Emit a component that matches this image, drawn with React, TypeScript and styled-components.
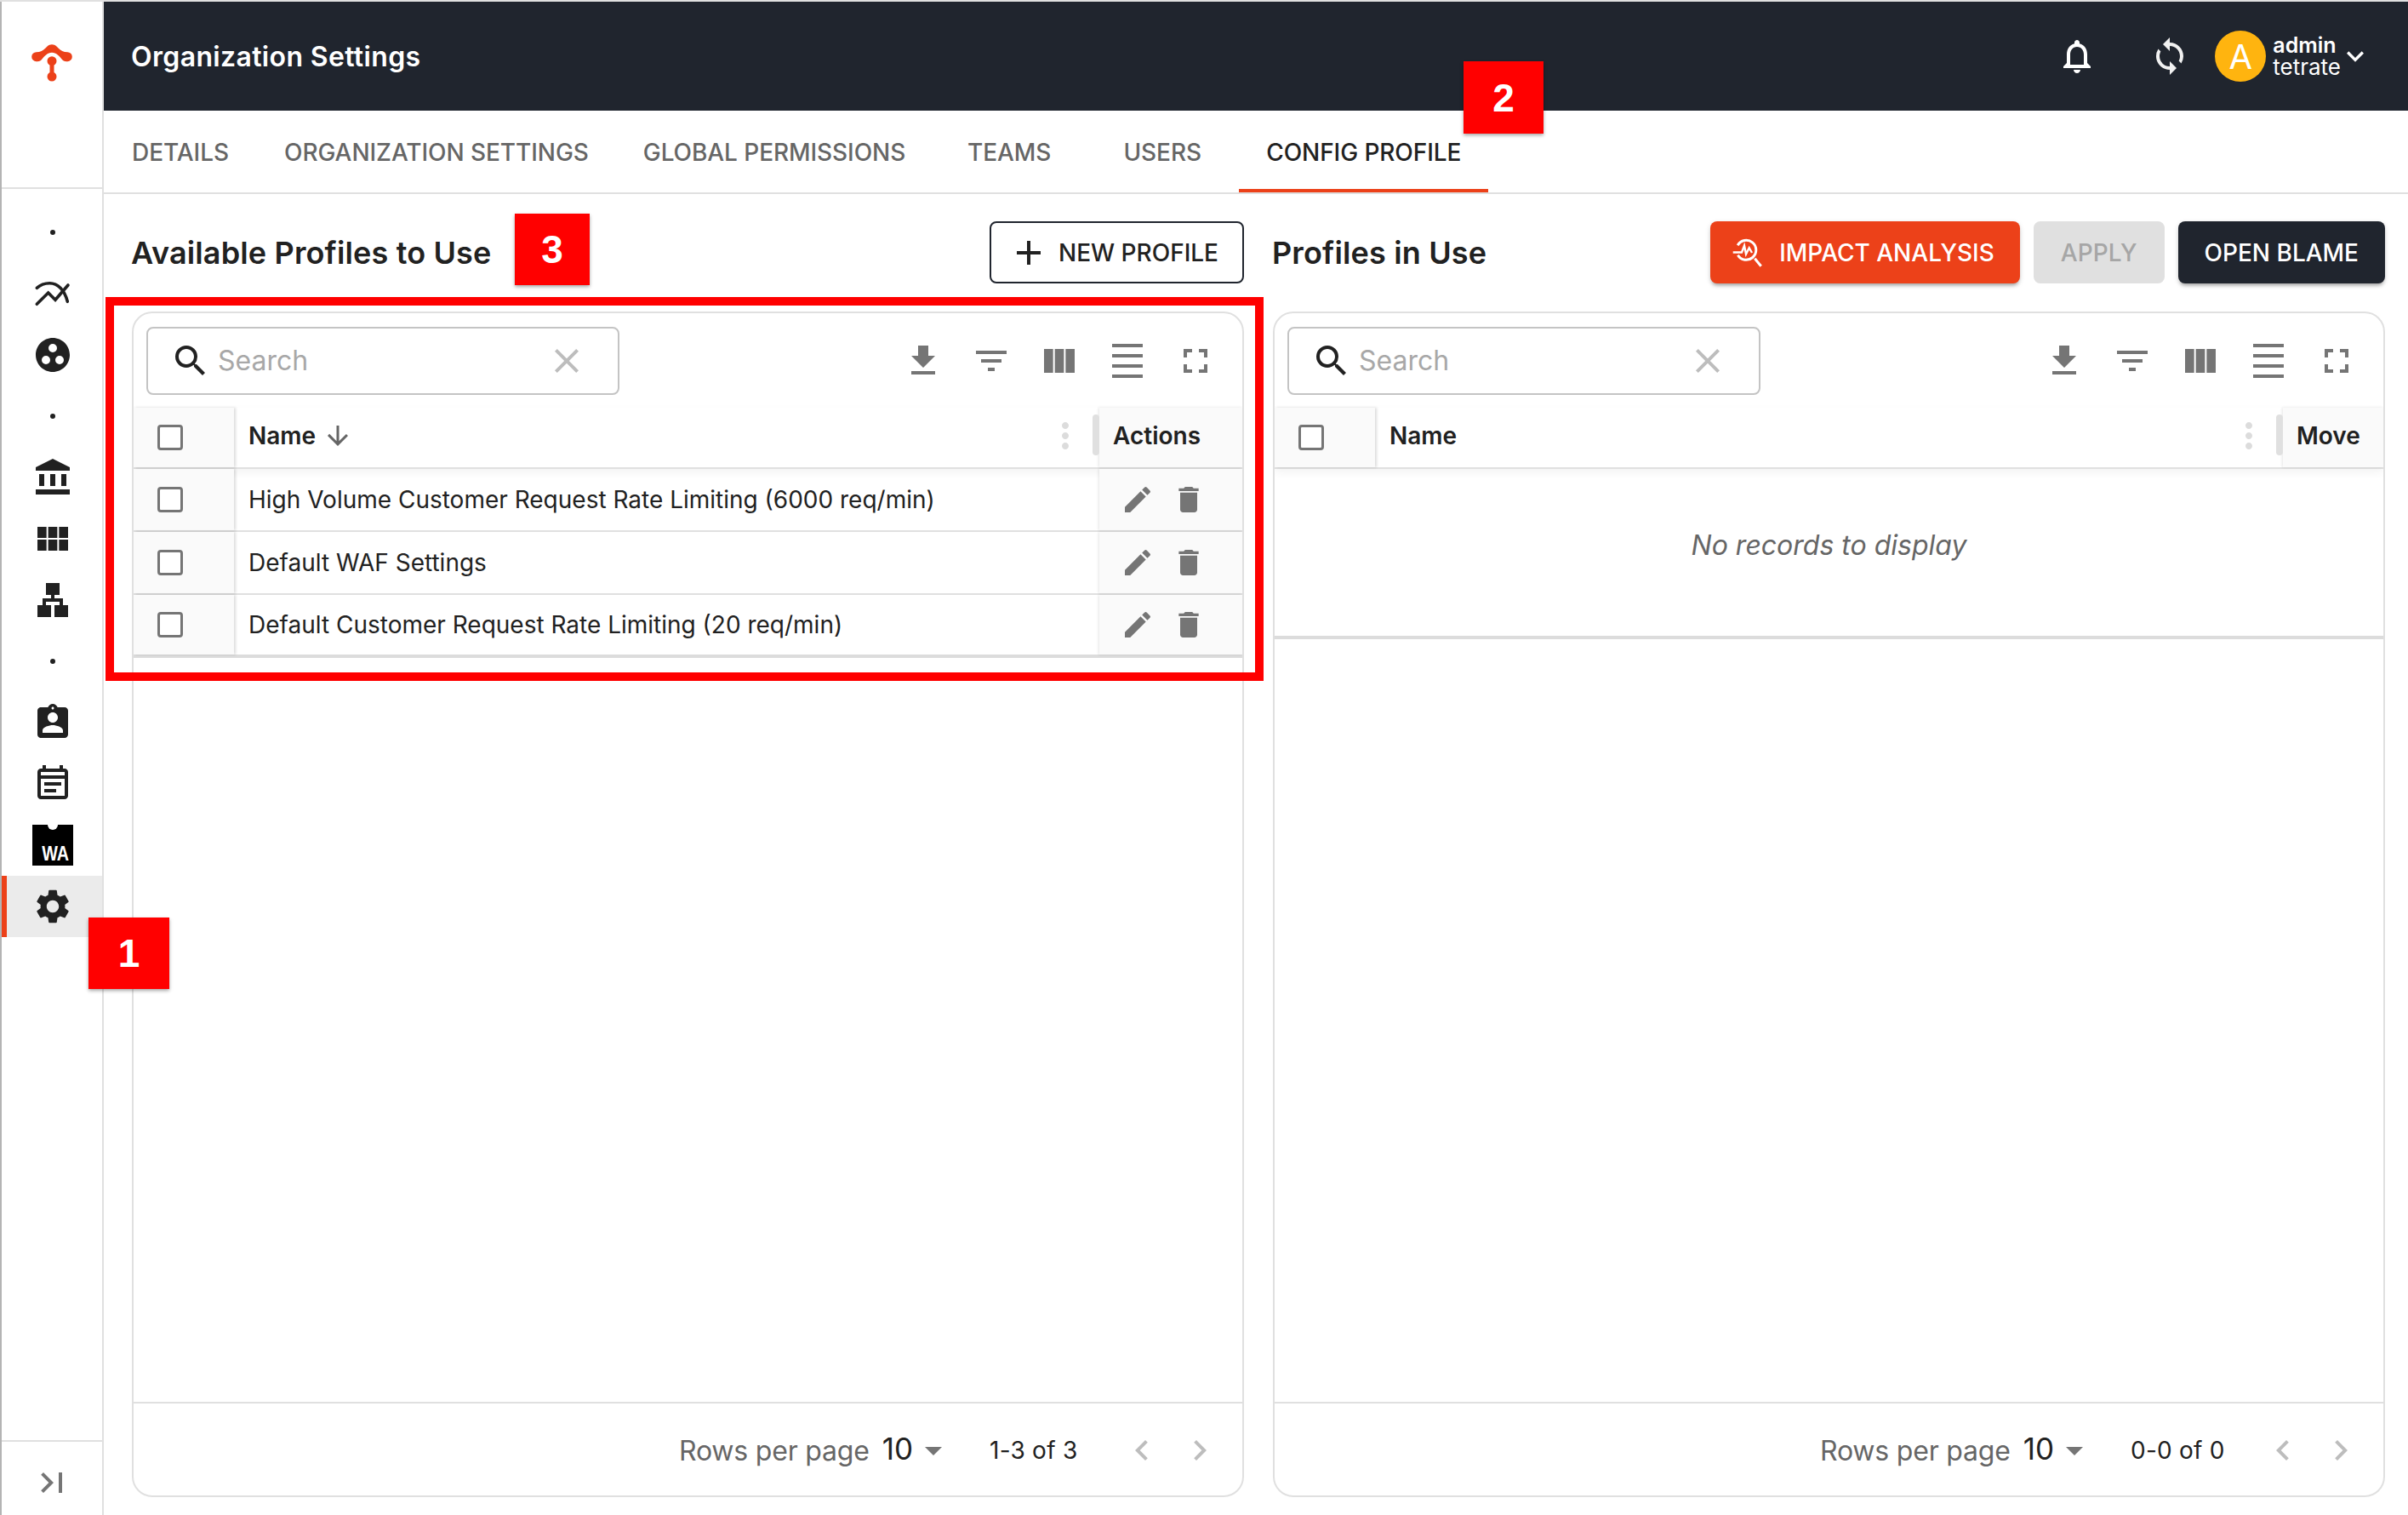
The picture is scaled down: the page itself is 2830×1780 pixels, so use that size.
import React from 'react';
import styled, { createGlobalStyle } from 'styled-components';
import {
  MdAccountBalance,
  MdAdd,
  MdArrowDownward,
  MdArrowDropDown,
  MdChevronLeft,
  MdChevronRight,
  MdClose,
  MdDelete,
  MdDensitySmall,
  MdEdit,
  MdFileDownload,
  MdFilterList,
  MdFullscreen,
  MdGroupWork,
  MdKeyboardArrowDown,
  MdLan,
  MdLastPage,
  MdMoreVert,
  MdOutlineEventNote,
  MdOutlineNotifications,
  MdSearch,
  MdSettings,
  MdSync,
  MdViewColumn,
  MdViewModule,
} from 'react-icons/md';

const GlobalStyle = createGlobalStyle`
  html, body {
    margin: 0;
    padding: 0;
    background: #fff;
  }
  body {
    font-family: Inter, "Liberation Sans", sans-serif;
    color: #212121;
    -webkit-font-smoothing: antialiased;
  }
  * {
    box-sizing: border-box;
  }
`;

const Page = styled.div`
  position: relative;
  width: 2830px;
  height: 1780px;
  display: flex;
  overflow: hidden;
  background: #fff;
  border-top: 2px solid #e0e0e0;
`;

const Sidebar = styled.nav`
  width: 122px;
  flex: none;
  display: flex;
  flex-direction: column;
  border-left: 2px solid #b4b4b4;
  border-right: 2px solid #e0e0e0;
`;

const LogoZone = styled.div`
  height: 220px;
  flex: none;
  display: flex;
  justify-content: center;
  padding-top: 48px;
  border-bottom: 2px solid #e0e0e0;
`;

const NavList = styled.div`
  flex: 1;
  padding-top: 15px;
`;

const NavItem = styled.div<{ $active?: boolean }>`
  height: 72px;
  display: flex;
  align-items: center;
  justify-content: center;
  padding-left: 2px;
  color: #212121;
  background: ${(p) => (p.$active ? '#ebebeb' : 'transparent')};
  box-shadow: ${(p) => (p.$active ? 'inset 6px 0 0 #ec4119' : 'none')};
  svg {
    width: 48px;
    height: 48px;
  }
`;

const NavDot = styled.span`
  width: 6px;
  height: 6px;
  border-radius: 50%;
  background: #212121;
`;

const WaMark = styled.div`
  position: relative;
  width: 48px;
  height: 48px;
  background: #000;
  color: #fff;
  font: 700 23px/1 "Liberation Sans", sans-serif;
  display: flex;
  align-items: flex-end;
  justify-content: flex-end;
  padding: 0 5px 2px 0;
  &::before {
    content: '';
    position: absolute;
    top: -6px;
    left: 18px;
    width: 12px;
    height: 12px;
    border-radius: 50%;
    background: #fff;
  }
`;

const WaText = styled.span`
  transform: scaleX(0.86);
  transform-origin: right center;
`;

const CollapseBar = styled.div`
  height: 88px;
  flex: none;
  display: flex;
  justify-content: center;
  padding-top: 24px;
  border-top: 2px solid #e0e0e0;
  color: #757575;
  svg {
    width: 48px;
    height: 48px;
  }
`;

const Main = styled.main`
  flex: 1;
  min-width: 0;
  display: flex;
  flex-direction: column;
`;

const TopBar = styled.header`
  height: 128px;
  flex: none;
  display: flex;
  align-items: center;
  padding: 0 42px 0 32px;
  background: #20252e;
  color: #fff;
`;

const PageTitle = styled.h1`
  margin: 0;
  flex: 1;
  font-size: 32px;
  font-weight: 600;
  letter-spacing: 0.35px;
`;

const TopIcon = styled.span`
  display: flex;
  margin-right: 61px;
  svg {
    width: 48px;
    height: 48px;
  }
`;

const SyncIcon = styled(TopIcon)`
  margin-right: 29px;
  color: #f1f1f1;
`;

const Avatar = styled.div`
  width: 60px;
  height: 60px;
  flex: none;
  display: flex;
  align-items: center;
  justify-content: center;
  border-radius: 50%;
  background: #ffb40f;
  font-size: 40px;
`;

const UserBlock = styled.div`
  margin-left: 8px;
  font-size: 26px;
  line-height: 26px;
`;

const UserName = styled.div`
  font-size: 25px;
  font-weight: 600;
`;

const UserMenu = styled.span`
  display: flex;
  margin-left: -3px;
  svg {
    width: 40px;
    height: 40px;
  }
`;

const TabBar = styled.div`
  height: 98px;
  flex: none;
  display: flex;
  border-bottom: 2px solid #e0e0e0;
`;

const Tab = styled.div<{ $active?: boolean }>`
  min-width: 180px;
  height: 96px;
  padding: 5px 32px 0;
  display: flex;
  align-items: center;
  justify-content: center;
  font-size: 28px;
  font-weight: 500;
  letter-spacing: -0.07px;
  color: ${(p) => (p.$active ? '#212121' : '#666')};
  border-bottom: 4px solid ${(p) => (p.$active ? '#ec4119' : 'transparent')};
`;

const Content = styled.div`
  flex: 1;
  min-height: 0;
  display: grid;
  grid-template-columns: 1307px 1307px;
  column-gap: 34px;
  padding: 32px 27px 21px 33px;
`;

const Column = styled.section`
  min-height: 0;
  display: flex;
  flex-direction: column;
`;

const TitleRow = styled.div`
  height: 73px;
  flex: none;
  display: flex;
  align-items: center;
  gap: 16px;
  margin-bottom: 33px;
`;

const SectionTitle = styled.h2`
  margin: 0 auto 0 -1px;
  font-size: 36px;
  font-weight: 600;
  letter-spacing: 0.15px;
`;

type ButtonVariant = 'outline' | 'primary' | 'dark' | 'disabled';

const buttonPadding: Record<ButtonVariant, string> = {
  outline: '0 28px 0 20px',
  primary: '0 30px 0 23px',
  dark: '0 31px',
  disabled: '0 32px',
};

const buttonBackground: Record<ButtonVariant, string> = {
  outline: '#fff',
  primary: '#ec4119',
  dark: '#20252e',
  disabled: '#e0e0e0',
};

const Button = styled.div<{ $variant: ButtonVariant }>`
  height: 73px;
  display: flex;
  align-items: center;
  justify-content: center;
  gap: ${(p) => (p.$variant === 'outline' ? '11px' : '18px')};
  padding: ${(p) => buttonPadding[p.$variant]};
  border-radius: 8px;
  font-size: 28px;
  font-weight: 500;
  color: ${(p) =>
    p.$variant === 'outline' ? '#212121' : p.$variant === 'disabled' ? '#a6a6a6' : '#fff'};
  background: ${(p) => buttonBackground[p.$variant]};
  border: ${(p) => (p.$variant === 'outline' ? '2px solid #20252e' : 'none')};
  box-shadow: ${(p) =>
    p.$variant === 'primary' || p.$variant === 'dark'
      ? '0 4px 4px -2px rgba(0,0,0,.3), 0 2px 6px rgba(0,0,0,.14)'
      : 'none'};
  svg {
    flex: none;
  }
`;

const Panel = styled.div`
  flex: 1;
  min-height: 0;
  display: flex;
  flex-direction: column;
  border: 2px solid #e0e0e0;
  border-radius: 24px;
  overflow: hidden;
`;

const Toolbar = styled.div`
  height: 111px;
  flex: none;
  display: flex;
  align-items: center;
  padding: 0 31px 0 15px;
`;

const SearchBox = styled.div`
  width: 556px;
  height: 80px;
  display: flex;
  align-items: center;
  padding: 0 36px 0 26px;
  border: 2px solid #c4c4c4;
  border-radius: 8px;
  color: #212121;
  svg {
    width: 48px;
    height: 48px;
    flex: none;
  }
`;

const SearchText = styled.span`
  flex: 1;
  margin-left: 8px;
  font-size: 32px;
  color: #a8a8a8;
`;

const ClearIcon = styled.span`
  display: flex;
  color: #bdbdbd;
`;

const ToolIcons = styled.div`
  display: flex;
  gap: 32px;
  margin-left: auto;
  color: #757575;
  svg {
    width: 48px;
    height: 48px;
    display: block;
  }
`;

const HeaderRow = styled.div<{ $lastCol: number }>`
  height: 72px;
  flex: none;
  display: grid;
  grid-template-columns: 118px 1fr ${(p) => p.$lastCol}px;
  border-bottom: 2px solid #e0e0e0;
  box-shadow: 0 4px 10px rgba(0, 0, 0, 0.05);
  font-size: 28px;
  font-weight: 600;
`;

const BodyRow = styled.div<{ $last?: boolean }>`
  height: 74px;
  flex: none;
  display: grid;
  grid-template-columns: 118px 1fr 168px;
  border-bottom: ${(p) => (p.$last ? '4px solid #dcdcdc' : '2px solid #e0e0e0')};
  font-size: 28px;
`;

const CheckCell = styled.div`
  display: flex;
  align-items: center;
  justify-content: center;
  padding-right: 33px;
  background: #fafafa;
  box-shadow: 2px 0 3px rgba(0, 0, 0, 0.14);
`;

const Checkbox = styled.span`
  width: 30px;
  height: 30px;
  border: 3px solid #757575;
  border-radius: 4px;
  background: #fff;
`;

const NameCell = styled.div`
  position: relative;
  display: flex;
  align-items: center;
  padding-left: 17px;
  min-width: 0;
`;

const HeadCell = styled(NameCell)`
  padding-bottom: 4px;
`;

const SortIcon = styled.span`
  display: flex;
  margin-left: 8px;
  color: #666;
  svg {
    width: 36px;
    height: 36px;
  }
`;

const ColumnMenu = styled.span`
  display: flex;
  margin-left: auto;
  margin-right: 16px;
  color: #dcdcdc;
  svg {
    width: 48px;
    height: 48px;
  }
`;

const Resizer = styled.span`
  position: absolute;
  right: 0;
  top: 8px;
  width: 8px;
  height: 48px;
  border-radius: 4px;
  background: #e0e0e0;
`;

const PinnedHead = styled.div`
  display: flex;
  align-items: center;
  padding: 0 0 4px 16px;
  background: #fafafa;
  box-shadow: -1px 0 3px rgba(0, 0, 0, 0.1);
`;

const ActionCell = styled.div`
  display: flex;
  align-items: center;
  gap: 20px;
  padding-left: 25px;
  color: #757575;
  background: #fafafa;
  box-shadow: -1px 0 3px rgba(0, 0, 0, 0.1);
  svg {
    width: 40px;
    height: 40px;
    display: block;
  }
`;

const EmptyRow = styled.div`
  height: 200px;
  flex: none;
  display: flex;
  justify-content: center;
  padding-top: 70px;
  border-bottom: 4px solid #dcdcdc;
  font-size: 32px;
  font-style: italic;
  color: #666;
`;

const Filler = styled.div`
  flex: 1;
`;

const Footer = styled.div`
  height: 110px;
  flex: none;
  display: flex;
  align-items: center;
  padding: 2px 0 0 641px;
  border-top: 2px solid #e0e0e0;
  font-size: 28px;
`;

const RowsLabel = styled.span`
  color: #666;
  font-size: 32px;
  letter-spacing: -0.2px;
  margin-right: 15px;
`;

const RowsValue = styled.span`
  font-size: 35px;
  margin-bottom: 4px;
`;

const RowsArrow = styled.span`
  display: flex;
  margin-right: 42px;
  color: #757575;
  svg {
    width: 48px;
    height: 48px;
  }
`;

const PageRange = styled.span`
  width: 108px;
  white-space: nowrap;
  letter-spacing: 0.25px;
`;

const PagerIcons = styled.span`
  display: flex;
  gap: 20px;
  margin-left: 47px;
  color: #bdbdbd;
  svg {
    width: 48px;
    height: 48px;
  }
`;

const RedFrame = styled.div`
  position: absolute;
  left: 124px;
  top: 347px;
  width: 1361px;
  height: 451px;
  border: 10px solid #ff0000;
  pointer-events: none;
`;

const Callout = styled.div<{ $x: number; $y: number; $w: number; $h: number }>`
  position: absolute;
  left: ${(p) => p.$x}px;
  top: ${(p) => p.$y}px;
  width: ${(p) => p.$w}px;
  height: ${(p) => p.$h}px;
  display: flex;
  align-items: center;
  justify-content: center;
  background: #ff0000;
  box-shadow: 0 2px 4px rgba(0, 0, 0, 0.35);
  color: #fff;
  font: 700 46px/1 "Liberation Sans", sans-serif;
`;

const BrandMark = () => (
  <svg width="48" height="48" viewBox="0 0 48 48" fill="#ec4119">
    <path d="M5.7 11.2C10.5 11.2 13.5 9.5 16.5 6.5L18.5 4.5C21.5 1.6 26.5 1.6 29.5 4.5L31.5 6.5C34.5 9.5 37.5 11.2 42.3 11.2A5.5 5.5 0 0 1 42.3 22.2C41 22.2 38 22 36.5 20.5C33 16 29 11.7 24 11.7C19 11.7 15 16 11.5 20.5C10 22 7 22.2 5.7 22.2A5.5 5.5 0 0 1 5.7 11.2Z" />
    <circle cx="24" cy="21.7" r="5.5" />
    <rect x="21.5" y="24" width="5" height="14" />
    <circle cx="24" cy="40" r="5.5" />
  </svg>
);

const TrendIcon = () => (
  <svg
    viewBox="0 0 48 48"
    fill="none"
    stroke="currentColor"
    strokeWidth="3.6"
    strokeLinecap="round"
  >
    <path d="M5.3 17.3C10 13 15 11.7 20.3 11.7C30 11.7 38 20 41.3 33.3" />
    <path d="M5.3 36.3L18.7 23L27 31.3L42 14" />
  </svg>
);

const ContactIcon = () => (
  <svg viewBox="0 0 24 24" fill="currentColor">
    <path d="M19 3h-4.18C14.4 1.84 13.3 1 12 1c-1.3 0-2.4.84-2.82 2H5c-.14 0-.27.01-.4.04-.39.08-.74.28-1.01.55-.18.18-.33.4-.43.64-.1.23-.16.49-.16.77v14c0 .27.06.54.16.78s.25.45.43.64c.27.27.62.47 1.01.55.13.02.26.03.4.03h14c1.1 0 2-.9 2-2V5c0-1.1-.9-2-2-2zm-7-.25c.41 0 .75.34.75.75s-.34.75-.75.75-.75-.34-.75-.75.34-.75.75-.75zM12 6c1.66 0 3 1.34 3 3s-1.34 3-3 3-3-1.34-3-3 1.34-3 3-3zm6 12H6v-1.4c0-2 4-3.1 6-3.1s6 1.1 6 3.1V18z" />
  </svg>
);

const ImpactIcon = () => (
  <svg width="40" height="40" viewBox="0 0 40 40" fill="none" stroke="#fff" strokeWidth="3">
    <path d="M9.2 11.3A11.5 11.5 0 1 1 9.4 22.65" />
    <path d="M29.3 26.8L36.7 35.8" />
    <path d="M3.7 19.5H14L17 11.5L19 21.5L22.7 14.2L26 20" strokeWidth="2.4" />
  </svg>
);

const toolIcons = [MdFileDownload, MdFilterList, MdViewColumn, MdDensitySmall, MdFullscreen];

const TableToolbar = () => (
  <Toolbar>
    <SearchBox>
      <MdSearch />
      <SearchText>Search</SearchText>
      <ClearIcon>
        <MdClose />
      </ClearIcon>
    </SearchBox>
    <ToolIcons>
      {toolIcons.map((Icon, i) => (
        <Icon key={i} />
      ))}
    </ToolIcons>
  </Toolbar>
);

const Pagination = ({ range }: { range: string }) => (
  <Footer>
    <RowsLabel>Rows per page</RowsLabel>
    <RowsValue>10</RowsValue>
    <RowsArrow>
      <MdArrowDropDown />
    </RowsArrow>
    <PageRange>{range}</PageRange>
    <PagerIcons>
      <MdChevronLeft />
      <MdChevronRight />
    </PagerIcons>
  </Footer>
);

const tabs = [
  'DETAILS',
  'ORGANIZATION SETTINGS',
  'GLOBAL PERMISSIONS',
  'TEAMS',
  'USERS',
  'CONFIG PROFILE',
];

const profiles = [
  'High Volume Customer Request Rate Limiting (6000 req/min)',
  'Default WAF Settings',
  'Default Customer Request Rate Limiting (20 req/min)',
];

export default function App(): JSX.Element {
  return (
    <Page>
      <GlobalStyle />
      <Sidebar>
        <LogoZone>
          <BrandMark />
        </LogoZone>
        <NavList>
          <NavItem>
            <NavDot />
          </NavItem>
          <NavItem>
            <TrendIcon />
          </NavItem>
          <NavItem>
            <MdGroupWork />
          </NavItem>
          <NavItem>
            <NavDot />
          </NavItem>
          <NavItem>
            <MdAccountBalance />
          </NavItem>
          <NavItem>
            <MdViewModule />
          </NavItem>
          <NavItem>
            <MdLan />
          </NavItem>
          <NavItem>
            <NavDot />
          </NavItem>
          <NavItem>
            <ContactIcon />
          </NavItem>
          <NavItem>
            <MdOutlineEventNote />
          </NavItem>
          <NavItem>
            <WaMark>
              <WaText>WA</WaText>
            </WaMark>
          </NavItem>
          <NavItem $active>
            <MdSettings />
          </NavItem>
        </NavList>
        <CollapseBar>
          <MdLastPage />
        </CollapseBar>
      </Sidebar>

      <Main>
        <TopBar>
          <PageTitle>Organization Settings</PageTitle>
          <TopIcon>
            <MdOutlineNotifications />
          </TopIcon>
          <SyncIcon>
            <MdSync />
          </SyncIcon>
          <Avatar>A</Avatar>
          <UserBlock>
            <UserName>admin</UserName>
            <div>tetrate</div>
          </UserBlock>
          <UserMenu>
            <MdKeyboardArrowDown />
          </UserMenu>
        </TopBar>

        <TabBar>
          {tabs.map((t) => (
            <Tab key={t} $active={t === 'CONFIG PROFILE'}>
              {t}
            </Tab>
          ))}
        </TabBar>

        <Content>
          <Column>
            <TitleRow>
              <SectionTitle>Available Profiles to Use</SectionTitle>
              <Button $variant="outline">
                <MdAdd size={48} />
                NEW PROFILE
              </Button>
            </TitleRow>
            <Panel>
              <TableToolbar />
              <HeaderRow $lastCol={168}>
                <CheckCell>
                  <Checkbox />
                </CheckCell>
                <HeadCell>
                  Name
                  <SortIcon>
                    <MdArrowDownward />
                  </SortIcon>
                  <ColumnMenu>
                    <MdMoreVert />
                  </ColumnMenu>
                  <Resizer />
                </HeadCell>
                <PinnedHead>Actions</PinnedHead>
              </HeaderRow>
              {profiles.map((name, i) => (
                <BodyRow key={name} $last={i === profiles.length - 1}>
                  <CheckCell>
                    <Checkbox />
                  </CheckCell>
                  <NameCell>{name}</NameCell>
                  <ActionCell>
                    <MdEdit />
                    <MdDelete />
                  </ActionCell>
                </BodyRow>
              ))}
              <Filler />
              <Pagination range="1-3 of 3" />
            </Panel>
          </Column>

          <Column>
            <TitleRow>
              <SectionTitle>Profiles in Use</SectionTitle>
              <Button $variant="primary">
                <ImpactIcon />
                IMPACT ANALYSIS
              </Button>
              <Button $variant="disabled">APPLY</Button>
              <Button $variant="dark">OPEN BLAME</Button>
            </TitleRow>
            <Panel>
              <TableToolbar />
              <HeaderRow $lastCol={118}>
                <CheckCell>
                  <Checkbox />
                </CheckCell>
                <HeadCell>
                  Name
                  <ColumnMenu>
                    <MdMoreVert />
                  </ColumnMenu>
                  <Resizer />
                </HeadCell>
                <PinnedHead>Move</PinnedHead>
              </HeaderRow>
              <EmptyRow>No records to display</EmptyRow>
              <Filler />
              <Pagination range="0-0 of 0" />
            </Panel>
          </Column>
        </Content>
      </Main>

      <RedFrame />
      <Callout $x={104} $y={1076} $w={95} $h={84}>
        1
      </Callout>
      <Callout $x={1720} $y={70} $w={94} $h={85}>
        2
      </Callout>
      <Callout $x={605} $y={249} $w={88} $h={84}>
        3
      </Callout>
    </Page>
  );
}
